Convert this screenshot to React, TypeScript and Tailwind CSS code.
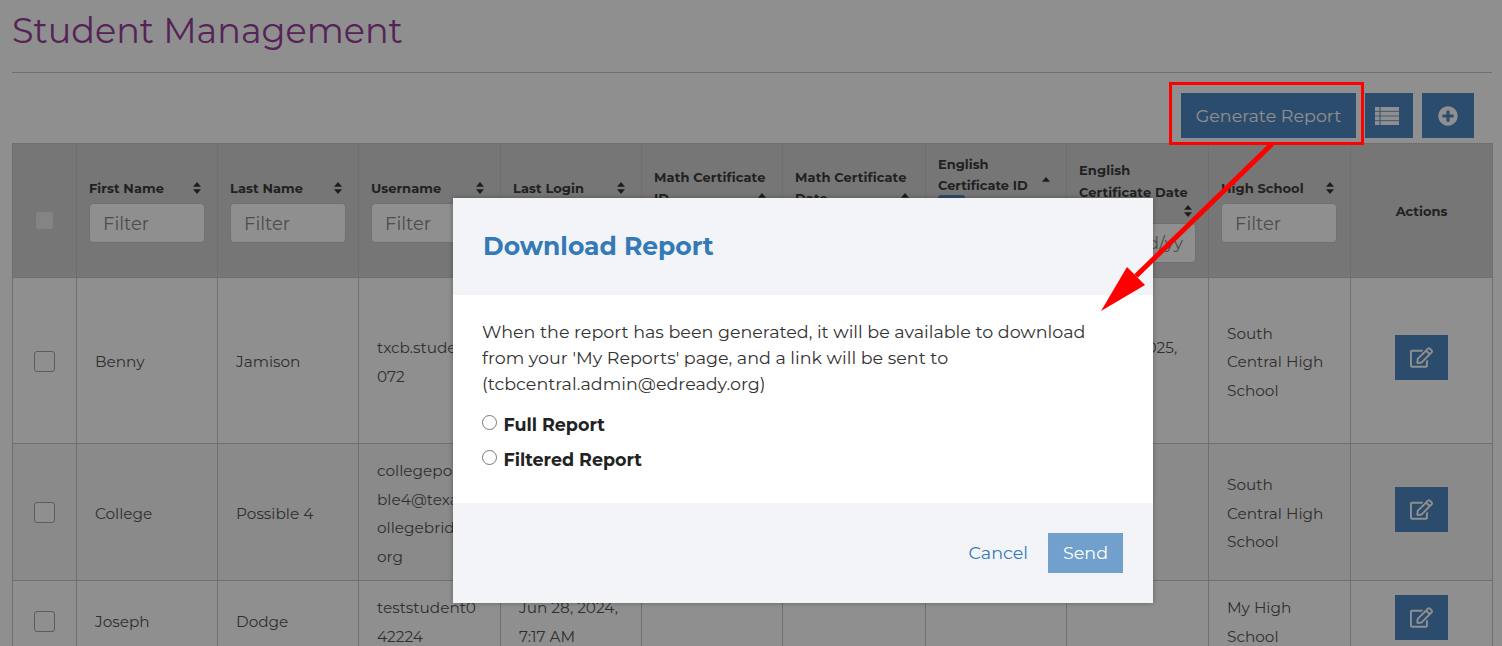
import { FaRegEdit, FaPlusCircle } from 'react-icons/fa';

const font = { fontFamily: 'Montserrat, Inter, "Liberation Sans", sans-serif' };

function SortIcon({ down = true }: { down?: boolean }) {
  return (
    <svg width="8" height="12" viewBox="0 0 8 12" className="shrink-0 fill-[#333]">
      <path d="M4 0 8 4.8H0z" />
      {down && <path d="M4 12 0 7.2h8z" />}
    </svg>
  );
}

function ListIcon() {
  const rows = [0, 4.7, 9.4, 14.1];
  return (
    <svg width="24" height="18" viewBox="0 0 24 18" className="fill-white">
      {rows.map(y => (
        <g key={y}>
          <rect x="0" y={y} width="4.5" height="3.9" />
          <rect x="5.5" y={y} width="18.5" height="3.9" />
        </g>
      ))}
    </svg>
  );
}

function FilterInput() {
  return (
    <input
      readOnly
      placeholder="Filter"
      className="mt-[5px] h-10 w-[116px] rounded-[4px] border border-[#c8c8c8] bg-white px-[13px] pt-[3px] text-[18px] font-normal placeholder:text-[#8a8a8a]"
    />
  );
}

function Head({ label }: { label: string }) {
  return (
    <th className="border border-[#c6c6c6] px-3 text-left align-middle">
      <div className="flex items-center justify-between pr-1 text-[13px] font-bold text-[#3c3c3c]">
        <span className="translate-y-[1px] tracking-[0.05px]">{label}</span>
        <SortIcon />
      </div>
      <FilterInput />
    </th>
  );
}

function MathHead({ lines }: { lines: string[] }) {
  return (
    <th className="border border-[#c6c6c6] px-3 pt-[23px] text-left align-top">
      <div className="text-[13px] font-bold leading-[21px] tracking-[0.1px] text-[#3c3c3c]">
        <div>{lines[0]}</div>
        <div className="flex items-start justify-between pr-1">
          {lines[1]}
          <span className="mt-[5px]"><SortIcon /></span>
        </div>
      </div>
    </th>
  );
}

function Cell({ children, top }: { children?: React.ReactNode; top: string }) {
  return (
    <td className={`border border-[#c6c6c6] pl-[18px] pr-3 align-middle text-[15.3px] leading-[28.5px] text-[#555] ${top}`}>
      {children}
    </td>
  );
}

function BodyRow({ first, last, user, login, date, school, height, alt, top, actionPad }: {
  first: string; last: string; user: string[]; login?: string[]; date?: string[]; school: string[];
  height: string; alt?: boolean; top: string; actionPad: string;
}) {
  return (
    <tr className={`${height} ${alt ? 'bg-[#f6f6f6]' : 'bg-white'}`}>
      <td className={`border border-[#c6c6c6] text-center align-middle ${top}`}>
        <span className="inline-block h-[21px] w-[21px] translate-y-[2px] rounded-[3px] border border-[#a5a5a5] bg-white" />
      </td>
      <Cell top={top}>{first}</Cell>
      <Cell top={top}>{last}</Cell>
      <Cell top={top}>{user.map(l => <div key={l}>{l}</div>)}</Cell>
      <Cell top={top}>{login?.map(l => <div key={l}>{l}</div>)}</Cell>
      <Cell top={top} />
      <Cell top={top} />
      <Cell top={top} />
      <Cell top={top}>{date?.map(l => <div key={l}>{l}</div>)}</Cell>
      <Cell top={top}>{school.map(l => <div key={l}>{l}</div>)}</Cell>
      <td className={`border border-[#c6c6c6] text-center align-middle ${actionPad}`}>
        <button className="inline-flex h-[45px] w-[53px] items-center justify-center bg-[#4d88c1] text-white">
          <FaRegEdit className="text-[23px]" />
        </button>
      </td>
    </tr>
  );
}

export default function App() {
  return (
    <div className="relative h-screen w-full overflow-hidden bg-white" style={font}>
      <div className="pl-3 pr-[10px]">
        <h1 className="h-[73px] border-b border-[#c6c6c6] pt-[9px] text-[35px] font-normal leading-[44px] text-[#993f9e]">
          Student Management
        </h1>
        <div className="flex justify-end gap-[9px] pr-[18px] pt-5">
          <button className="h-[45px] w-[175px] bg-[#4d88c1] pt-[1px] text-[17.5px] font-normal text-white">Generate Report</button>
          <button className="flex h-[45px] w-12 items-center justify-center bg-[#4d88c1] pr-1">
            <ListIcon />
          </button>
          <button className="flex h-[45px] w-[52px] items-center justify-center bg-[#4d88c1] pt-[1px] text-white">
            <FaPlusCircle className="text-[20px]" />
          </button>
        </div>
        <table className="mt-[5px] w-full table-fixed border-collapse">
          <colgroup>
            <col className="w-[64px]" />
            <col className="w-[141px]" />
            <col className="w-[141px]" />
            <col className="w-[142px]" />
            <col className="w-[141px]" />
            <col className="w-[141px]" />
            <col className="w-[143px]" />
            <col className="w-[141px]" />
            <col className="w-[142px]" />
            <col className="w-[142px]" />
            <col className="w-[142px]" />
          </colgroup>
          <thead>
            <tr className="h-[134px] bg-[#d3d3d3]">
              <th className="border border-[#c6c6c6] pt-[27px] align-middle">
                <span className="inline-block h-[17px] w-[17px] rounded-[3px] bg-[#ececec]" />
              </th>
              <Head label="First Name" />
              <Head label="Last Name" />
              <Head label="Username" />
              <Head label="Last Login" />
              <MathHead lines={['Math Certificate', 'ID']} />
              <MathHead lines={['Math Certificate', 'Date']} />
              <th className="border border-[#c6c6c6] px-3 pt-[10px] text-left align-top">
                <div className="text-[13px] font-bold leading-[20.5px] text-[#3c3c3c]">
                  <div>English</div>
                  <div className="flex items-start justify-between pr-1">
                    Certificate ID
                    <span className="pt-[2px]"><SortIcon down={false} /></span>
                  </div>
                </div>
                <div className="h-5 w-[27px] rounded-t-[3px] bg-[#4d88c1]" />
              </th>
              <th className="border border-[#c6c6c6] px-3 pt-[15px] text-left align-top">
                <div className="text-[13px] font-bold leading-[22px] tracking-[0.1px] text-[#3c3c3c]">
                  <div>English</div>
                  <div>Certificate Date</div>
                </div>
                <div className="flex justify-end pr-1 pt-[2px]"><SortIcon /></div>
                <input
                  readOnly
                  placeholder="mm/dd/yy"
                  className="mt-[6px] h-10 w-[117px] rounded-[4px] border border-[#c8c8c8] bg-white px-3 text-right text-[17px] font-normal placeholder:text-[#8a8a8a]"
                />
              </th>
              <Head label="High School" />
              <th className="border border-[#c6c6c6] pt-[3px] text-center align-middle text-[13px] font-bold text-[#3c3c3c]">
                Actions
              </th>
            </tr>
          </thead>
          <tbody>
            <BodyRow first="Benny" last="Jamison" user={['txcb.student', '072']} date={['May 8, 2025,', '9:30 AM']} school={['South', 'Central High', 'School']} height="h-[166px]" top="pt-1" actionPad="pb-[6px]" />
            <BodyRow first="College" last="Possible 4" user={['collegepossi', 'ble4@texasc', 'ollegebridge.', 'org']} school={['South', 'Central High', 'School']} height="h-[137px]" top="pt-1" actionPad="pb-[6px]" alt />
            <BodyRow first="Joseph" last="Dodge" user={['teststudent0', '42224']} login={['Jun 28, 2024,', '7:17 AM']} school={['My High', 'School']} height="h-[84px]" top="" actionPad="pb-[10px]" />
          </tbody>
        </table>
      </div>

      <div className="absolute inset-0 bg-black/44" />

      <div className="absolute left-[453px] top-[198px] w-[700px] bg-white shadow-[0_0_5px_rgba(0,0,0,0.3)]">
        <div className="flex h-[97px] items-center bg-[#f2f4f8] px-[30px]">
          <h2 className="text-[25px] font-bold text-[#337ab7]">Download Report</h2>
        </div>
        <div className="h-[208px] px-[29px] pt-6 text-[17.5px] text-[#333]">
          <p className="leading-[26px]">
            When the report has been generated, it will be available to download
            <br />
            from your 'My Reports' page, and a link will be sent to
            <br />
            (tcbcentral.admin@edready.org)
          </p>
          <label className="mt-[15px] flex h-[26px] items-center">
            <input type="radio" className="mr-[6.5px] h-[15px] w-[15px] -translate-y-[3px]" />
            <span className="font-bold text-[#222]">Full Report</span>
          </label>
          <label className="mt-[9px] flex h-[26px] items-center">
            <input type="radio" className="mr-[6.5px] h-[15px] w-[15px] -translate-y-[3px]" />
            <span className="font-bold text-[#222]">Filtered Report</span>
          </label>
        </div>
        <div className="flex h-[100px] items-center justify-end gap-5 bg-[#f2f4f8] pr-[30px]">
          <a className="text-[17.5px] text-[#337ab7]">Cancel</a>
          <button className="h-10 w-[75px] bg-[#72a0cd] text-[17.5px] text-white">Send</button>
        </div>
      </div>

      <div className="absolute left-[1169px] top-[82px] h-[63px] w-[195px] border-[3px] border-[#ff0000]" />
      <svg className="absolute inset-0" width="1502" height="646" viewBox="0 0 1502 646">
        <line x1="1272" y1="144" x2="1136" y2="276" stroke="#ff0000" strokeWidth="5" />
        <polygon points="1101,311 1127,267 1145,285" fill="#ff0000" />
      </svg>
    </div>
  );
}
